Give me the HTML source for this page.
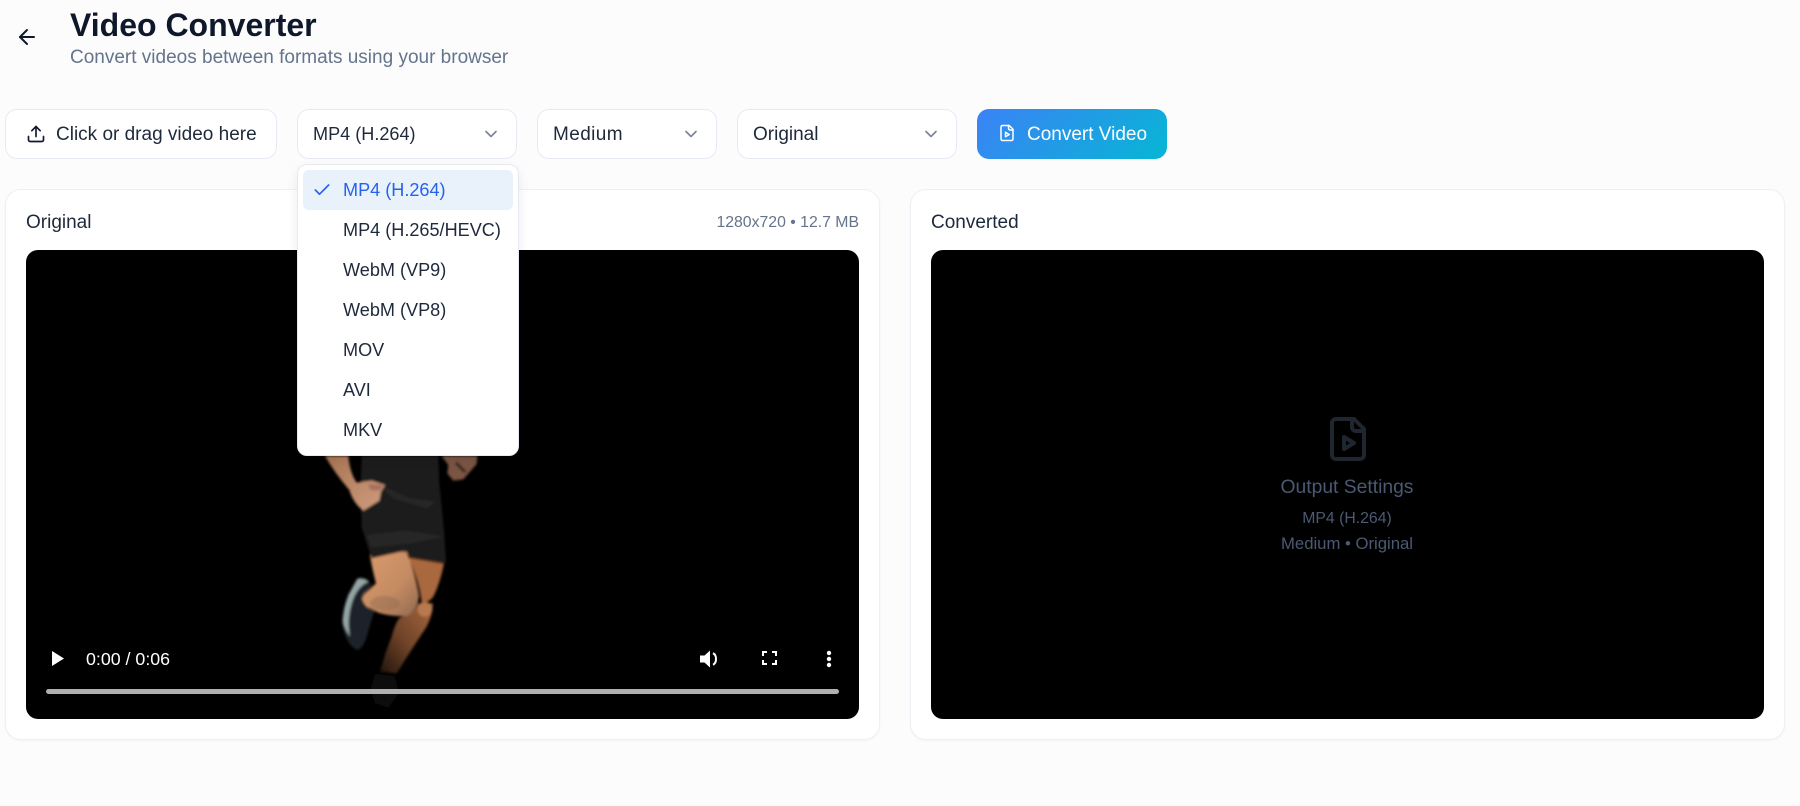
<!DOCTYPE html>
<html lang="en"><head><meta charset="utf-8"><title>Video Converter</title>
<style>
*{box-sizing:border-box;margin:0;padding:0}
html,body{width:1800px;height:806px;overflow:hidden;background:#fcfcfd;font-family:"Liberation Sans",sans-serif;color:#0f172a}
.a{position:absolute}
.t{position:absolute;white-space:nowrap;line-height:24px}
.box{position:absolute;background:#fff;border:1px solid #e6eaf2;border-radius:12px}
.card{position:absolute;background:#fff;border:1px solid #eef0f5;border-radius:16px;box-shadow:0 1px 2px rgba(15,23,42,.04)}
.vid{position:absolute;background:#000;border-radius:12px;overflow:hidden}
svg{position:absolute;display:block}
.item{position:absolute;left:45px;font-size:18.1px;line-height:40px;white-space:nowrap;color:#1e293b}
</style></head><body>

<svg style="left:15px;top:25px" width="24" height="24" viewBox="0 0 24 24" fill="none" stroke="#0f172a" stroke-width="2" stroke-linecap="round" stroke-linejoin="round"><path d="M12 19l-7-7 7-7"/><path d="M19 12H5"/></svg>
<div class="t" style="left:70px;top:6px;font-size:32px;font-weight:700;line-height:38px">Video Converter</div>
<div class="t" style="left:70px;top:46px;font-size:19px;color:#64748b">Convert videos between formats using your browser</div>

<div class="box" style="left:5px;top:109px;width:272px;height:50px"></div>
<svg style="left:26px;top:124px" width="20" height="20" viewBox="0 0 24 24" fill="none" stroke="#0f172a" stroke-width="2" stroke-linecap="round" stroke-linejoin="round"><path d="M21 15v4a2 2 0 0 1-2 2H5a2 2 0 0 1-2-2v-4"/><path d="M17 8l-5-5-5 5"/><path d="M12 3v12"/></svg>
<div class="t" style="left:56px;top:123px;font-size:19px;color:#1e293b">Click or drag video here</div>

<div class="box" style="left:297px;top:109px;width:220px;height:50px"></div>
<div class="t" style="left:313px;top:122px;font-size:18.1px;color:#1e293b">MP4 (H.264)</div>
<svg style="left:481px;top:124px" width="20" height="20" viewBox="0 0 24 24" fill="none" stroke="#7c8696" stroke-width="2" stroke-linecap="round" stroke-linejoin="round"><path d="M6 9l6 6 6-6"/></svg>

<div class="box" style="left:537px;top:109px;width:180px;height:50px"></div>
<div class="t" style="left:553px;top:123px;font-size:19px;letter-spacing:.4px;color:#1e293b">Medium</div>
<svg style="left:681px;top:124px" width="20" height="20" viewBox="0 0 24 24" fill="none" stroke="#7c8696" stroke-width="2" stroke-linecap="round" stroke-linejoin="round"><path d="M6 9l6 6 6-6"/></svg>

<div class="box" style="left:737px;top:109px;width:220px;height:50px"></div>
<div class="t" style="left:753px;top:123px;font-size:19px;color:#1e293b">Original</div>
<svg style="left:921px;top:124px" width="20" height="20" viewBox="0 0 24 24" fill="none" stroke="#7c8696" stroke-width="2" stroke-linecap="round" stroke-linejoin="round"><path d="M6 9l6 6 6-6"/></svg>

<div class="a" style="left:977px;top:109px;width:190px;height:50px;border-radius:12px;background:linear-gradient(135deg,#3b82f6,#06b6d4)"></div>
<svg style="left:998px;top:124px" width="18" height="18" viewBox="0 0 24 24" fill="none" stroke="#fff" stroke-width="2" stroke-linecap="round" stroke-linejoin="round"><path d="M15 2H6a2 2 0 0 0-2 2v16a2 2 0 0 0 2 2h12a2 2 0 0 0 2-2V7z"/><path d="M14 2v4a2 2 0 0 0 2 2h4"/><path d="M10 11l5 3-5 3z"/></svg>
<div class="t" style="left:1027px;top:123px;font-size:19px;color:#fff">Convert Video</div>

<div class="card" style="left:5px;top:189px;width:875px;height:551px"></div>
<div class="t" style="left:26px;top:211px;font-size:19px;color:#1e293b">Original</div>
<div class="t" style="right:941px;top:211px;font-size:15.8px;color:#64748b">1280x720 • 12.7 MB</div>

<div class="vid" style="left:26px;top:250px;width:833px;height:469px">
<svg style="left:-26px;top:-250px" width="1800" height="806" viewBox="0 0 1800 806">
<defs><filter id="b" x="-10%" y="-10%" width="120%" height="120%"><feGaussianBlur stdDeviation="3.6"/></filter>
<linearGradient id="th" x1="0" y1="0" x2="1" y2="1"><stop offset="0" stop-color="#dc9c6c"/><stop offset=".6" stop-color="#c48a62"/><stop offset="1" stop-color="#8e6850"/></linearGradient>
<linearGradient id="ll" x1="1" y1="0" x2="0" y2="1"><stop offset="0" stop-color="#a8683f"/><stop offset=".55" stop-color="#6e4228"/><stop offset="1" stop-color="#21140c"/></linearGradient>
<linearGradient id="arm" x1="0" y1="0" x2="1" y2="1"><stop offset="0" stop-color="#a87452"/><stop offset="1" stop-color="#cf9d7e"/></linearGradient>
</defs>
<g transform="translate(300 440) scale(.3333)" filter="url(#b)">
<path d="M225 700 L285 708 L298 760 L265 805 L225 790 L210 750Z" fill="#070707"/>
<path d="M300 532 Q340 525 355 490 L398 490 Q400 520 380 560 Q340 620 290 700 L240 695 Q255 640 275 590 Q285 550 300 532Z" fill="url(#ll)"/>
<ellipse cx="375" cy="508" rx="22" ry="22" fill="#b9794f"/>
<path d="M325 352 L432 370 Q420 430 400 470 Q385 490 365 490 Q360 430 325 352Z" fill="#a9683e"/>
<path d="M210 345 Q265 335 320 335 Q345 400 357 465 Q355 510 320 528 Q270 530 235 518 L190 495 Q180 475 195 460 L228 430 Q215 380 210 345Z" fill="url(#th)"/>
<ellipse cx="255" cy="490" rx="45" ry="22" fill="#8f6a52" opacity=".45"/>
<path d="M178 412 Q208 412 213 436 L185 470 Q190 500 222 515 L200 590 Q190 625 172 630 Q145 620 130 570 Q122 540 135 510 Q150 450 178 412Z" fill="#1d2429"/>
<path d="M172 416 Q195 415 205 425 Q170 440 155 490 Q140 540 150 590 Q135 570 128 545 Q128 510 145 465Z" fill="#94a5a5"/>
<path d="M185 48 L415 48 L418 130 L432 270 L185 262 L182 130Z" fill="#1a1a1a"/>
<path d="M230 130 L330 175 L410 185 L380 205 L280 175Z" fill="#252525"/>
<path d="M183 255 L432 268 L438 368 L330 350 L318 332 L215 355 L205 325Z" fill="#1d1d1d"/>
<path d="M200 285 L320 272 L432 290 L330 310 L215 322Z" fill="#282828"/>
<path d="M75 48 L145 48 Q150 100 170 128 L215 122 L255 135 L243 155 L238 182 L190 212 Q160 190 148 150 Q105 100 75 48Z" fill="url(#arm)"/>
<path d="M205 132 L250 135 L240 152 L210 150Z" fill="#a87060"/>
<path d="M425 48 L532 48 L530 72 L490 118 L460 122 L442 100 L445 75Z" fill="#7a5442"/>
<path d="M470 65 L500 95 L492 98 L465 72Z" fill="#2a1f1c"/>
</g></svg>
<svg style="left:26px;top:401px" width="12" height="15" viewBox="0 0 12 15"><path d="M0 0L12 7.5L0 15Z" fill="#fff"/></svg>
<div class="t" style="left:60px;top:397px;font-size:17.8px;color:#fff">0:00 / 0:06</div>
<svg style="left:674px;top:400px" width="20" height="18" viewBox="0 0 20 18"><path d="M0 5.5H4.5L10 .5V17.5L4.5 12.5H0Z" fill="#fff"/><path d="M13 3.2C17 5 17 13 13 14.8" fill="none" stroke="#fff" stroke-width="2"/></svg>
<svg style="left:736px;top:401px" width="15" height="14" viewBox="0 0 15 14" fill="none" stroke="#fff" stroke-width="2"><path d="M1 5V1H5M10 1H14V5M14 9V13H10M5 13H1V9"/></svg>
<svg style="left:800px;top:400px" width="6" height="18" viewBox="0 0 6 18" fill="#fff"><circle cx="3" cy="3" r="2.2"/><circle cx="3" cy="9" r="2.2"/><circle cx="3" cy="15" r="2.2"/></svg>
<div class="a" style="left:20px;top:439px;width:793px;height:5px;border-radius:3px;background:#b0b0b0"></div>
</div>

<div class="card" style="left:910px;top:189px;width:875px;height:551px"></div>
<div class="t" style="left:931px;top:211px;font-size:19px;color:#1e293b">Converted</div>
<div class="vid" style="left:931px;top:250px;width:833px;height:469px"></div>
<svg style="left:1324px;top:415px" width="48" height="48" viewBox="0 0 24 24" fill="none" stroke="#1f2630" stroke-width="2" stroke-linecap="round" stroke-linejoin="round"><path d="M15 2H6a2 2 0 0 0-2 2v16a2 2 0 0 0 2 2h12a2 2 0 0 0 2-2V7z"/><path d="M14 2v4a2 2 0 0 0 2 2h4"/><path d="M10 11l5 3-5 3z"/></svg>
<div class="t" style="left:1247px;width:200px;text-align:center;top:475.5px;font-size:19.3px;color:#4b5a72">Output Settings</div>
<div class="t" style="left:1247px;width:200px;text-align:center;top:507px;font-size:15.8px;color:#4b5a72">MP4 (H.264)</div>
<div class="t" style="left:1247px;width:200px;text-align:center;top:532px;font-size:16.7px;color:#4b5a72">Medium • Original</div>

<div class="a" style="left:297px;top:164px;width:222px;height:292px;background:#fff;border:1px solid #e6eaf2;border-radius:10px;box-shadow:0 4px 12px rgba(15,23,42,.08)">
<div class="a" style="left:5px;top:5px;width:210px;height:40px;border-radius:6px;background:#e9f1fb"></div>
<svg style="left:14px;top:15px" width="20" height="20" viewBox="0 0 24 24" fill="none" stroke="#2563eb" stroke-width="2" stroke-linecap="round" stroke-linejoin="round"><path d="M20 6L9 17l-5-5"/></svg>
<div class="item" style="top:5px;color:#2563eb">MP4 (H.264)</div>
<div class="item" style="top:45px">MP4 (H.265/HEVC)</div>
<div class="item" style="top:85px">WebM (VP9)</div>
<div class="item" style="top:125px">WebM (VP8)</div>
<div class="item" style="top:165px">MOV</div>
<div class="item" style="top:205px">AVI</div>
<div class="item" style="top:245px">MKV</div>
</div>
</body></html>
